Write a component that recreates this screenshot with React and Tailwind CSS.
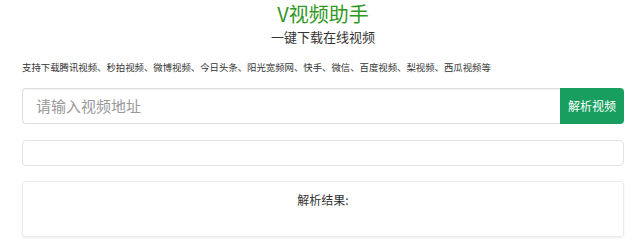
export default function App() {
  return (
    <div
      className="w-[640px] h-[243px] bg-white pl-[22px] pr-[16px] text-[#333]"
      style={{ fontFamily: '"Noto Sans CJK SC", "Liberation Sans", sans-serif' }}
    >
      {/* Header */}
      <div className="text-center pt-[1px]">
        <h1 className="text-[20px] leading-[26px] text-[#32981f]">V视频助手</h1>
        <p className="text-[13px] leading-[17px] text-[#333] mt-[1px]">一键下载在线视频</p>
      </div>

      <p className="text-[9.4px] leading-[12px] text-[#333] mt-[16px]">
        支持下载腾讯视频、秒拍视频、微博视频、今日头条、阳光宽频网、快手、微信、百度视频、梨视频、西瓜视频等
      </p>

      {/* Search */}
      <div className="flex mt-[15px] h-[36px]">
        <input
          type="text"
          placeholder="请输入视频地址"
          className="flex-1 min-w-0 border border-[#ddd] border-r-0 rounded-l-[4px] px-[13px] text-[15px] text-[#555] placeholder:text-[#999] outline-none shadow-[inset_0_1px_1px_rgba(0,0,0,0.05)]"
        />
        <button className="w-[64px] bg-[#189f5f] text-white text-[12px] rounded-r-[4px]">
          解析视频
        </button>
      </div>

      <div className="mt-[16px] h-[26px] border border-[#e3e3e3] rounded-[4px]"></div>

      {/* Result */}
      <div className="mt-[15px] h-[56px] border border-[#eaeaea] rounded-[3px] shadow-[0_1px_2px_rgba(0,0,0,0.08)] pt-[10px] text-center">
        <p className="text-[12px] leading-[16px] text-[#333]">解析结果:</p>
      </div>
    </div>
  );
}
